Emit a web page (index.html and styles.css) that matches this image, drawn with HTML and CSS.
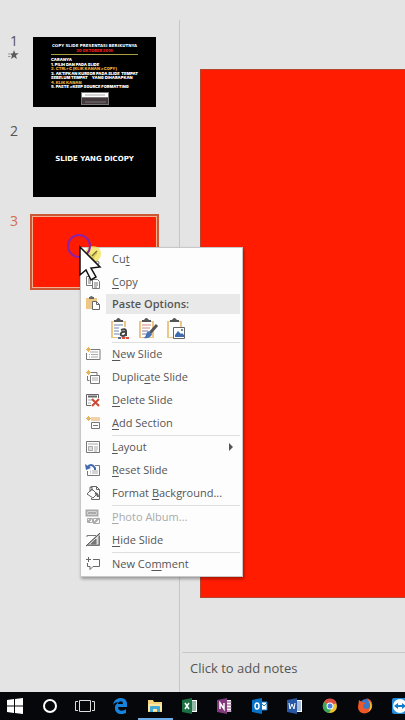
FILE: index.html
```
<!DOCTYPE html>
<html lang="en">
<head>
<meta charset="utf-8">
<meta name="viewport" content="width=device-width, initial-scale=1">
<title>Presentation editor</title>
<link rel="stylesheet" href="styles.css">
</head>
<body>
<div class="workspace">
  <nav class="slides" aria-label="Slides">
    <div class="slide-row">
      <div class="slide-label"><span>1</span>
        <svg class="star" width="11" height="10" viewBox="0 0 11 10"><path d="M6 0l1.200 3.200 3.500.1-2.800 2.100 1 3.600L6 7 3 9l1-3.600-2-1.700 2.900-.5z" fill="#5c5c5c"/><path d="M0 4h2M0 6.500h2.500" stroke="#999"/></svg>
      </div>
      <button class="thumb cover" type="button">
        <span class="cover-title">COPY SLIDE PRESENTASI BERIKUTNYA</span>
        <span class="cover-date">20 OKTOBER 2016</span>
        <span class="cover-list">
          <span>CARANYA</span>
          <span>1. PILIH DAN PADA SLIDE</span>
          <span class="gold">2. CTRL+C (KLIK KANAN &gt;COPY)</span>
          <span>3. AKTIFKAN KURSOR PADA SLIDE &nbsp;TEMPAT</span>
          <span>SEBELUM TEMPAT &nbsp; &nbsp; YANG DIHARAPKAN</span>
          <span class="gold">4. KLIK KANAN</span>
          <span>5. PASTE &gt;KEEP SOURCE FORMATTING</span>
        </span>
        <svg class="cover-badge" width="28" height="13" viewBox="0 0 28 13"><path fill="#777" d="M0 0h28v13H0z"/><path fill="#fff" d="M1 1h26v4H1z"/><path fill="#43383b" d="M1 6h26v6H1z"/><path d="M4 3h20" stroke="#aaa"/><path d="M4 10h21" stroke="#777"/></svg>
      </button>
    </div>
    <div class="slide-row">
      <div class="slide-label"><span>2</span></div>
      <button class="thumb plain" type="button">SLIDE YANG DICOPY</button>
    </div>
    <div class="slide-row current">
      <div class="slide-label"><span>3</span></div>
      <button class="thumb red" type="button" aria-label="Slide 3"></button>
    </div>
  </nav>
  <main class="editor">
    <div class="stage"><div class="canvas"></div></div>
    <div class="notes"><button type="button">Click to add notes</button></div>
  </main>
</div>

<div class="menu" role="menu">
  <button class="item" role="menuitem"><svg width="16" height="16" viewBox="0 0 16 16" fill="none" stroke="#666"><path d="M4 2l7 9M12 2L6 10"/><circle cx="5" cy="12" r="2"/><circle cx="12" cy="12" r="2"/></svg><span>Cu<u>t</u></span></button>
  <button class="item" role="menuitem"><svg width="16" height="16" viewBox="0 0 16 16" fill="#fff" stroke="#777"><path d="M1.500 2.500h6l1 1v8h-7z"/><path d="M3 5h3M3 7h3M3 9h3"/><path d="M7.500 5.500h5l2 2v7h-7z"/><path d="M9 9h4M9 11h4M9 13h3"/></svg><span><u>C</u>opy</span></button>
  <div class="heading"><svg width="16" height="16" viewBox="0 0 16 16"><path d="M1 3h11v11H1z" fill="#edc785"/><path d="M4 4V2h1q1-2 3 0h1v2z" fill="#666"/><path d="M7.500 6.500h4l3 3v5h-7z" fill="#fff" stroke="#666"/><path d="M11.500 6.500v3h3" fill="none" stroke="#666"/></svg><span>Paste Options:</span></div>
  <div class="paste">
    <button type="button" aria-label="Use destination theme"><svg width="22" height="24" viewBox="0 0 22 24"><path d="M2 4h15v17H2z" fill="#edc785"/><path d="M4 5h11v15H4z" fill="#fff"/><path d="M5 5V3h2q2-4 5 0h2v2z" fill="#555"/><path d="M5 8h9M5 11h6M5 14h6M5 17h6" stroke="#6685af"/><path d="M10 10h9v10h-9z" fill="#fff"/><path d="M12 13q5-2 5 1v5M17 15c-6-1-7 4-3 4q2 0 3-2" fill="none" stroke="#444" stroke-width="2"/><path d="M9 20h3v2H9z" fill="#668"/><path d="M13 20h3v2h-3zM17 20h3v2h-3z" fill="#d8503f"/></svg></button>
    <button type="button" aria-label="Keep source formatting"><svg width="22" height="24" viewBox="0 0 22 24"><path d="M2 4h15v17H2z" fill="#edc785"/><path d="M4 5h11v15H4z" fill="#fff"/><path d="M5 5V3h2q2-4 5 0h2v2z" fill="#555"/><path d="M5 8h9M5 11h8" stroke="#d4897c"/><path d="M5 14h6M5 17h4" stroke="#8a7bab"/><path d="M20 8l-7 8" stroke="#555" stroke-width="3"/><path d="M11 14l4 3q-1 5-9 4 3-1 3-4z" fill="#4773b5"/></svg></button>
    <button type="button" aria-label="Picture"><svg width="22" height="24" viewBox="0 0 22 24"><path d="M2 4h15v17H2z" fill="#edc785"/><path d="M4 5h11v15H4z" fill="#fff"/><path d="M5 5V3h2q2-4 5 0h2v2z" fill="#555"/><path d="M8.500 10.500h11v11h-11z" fill="#fff" stroke="#666"/><path d="M10 20v-2l3-4 3 3 1-1 2 2v2z" fill="#3c6cae"/><path d="M16 12h2v2h-2z" fill="#6c87aa"/></svg></button>
  </div>
  <hr>
  <button class="item" role="menuitem"><svg width="16" height="16" viewBox="0 0 16 16" fill="none" stroke="#777"><path d="M6 3.500h9v10H1.500V7"/><path d="M5 6h8M6 8.500h7M4 8.500h1M6 11h7M4 11h1" stroke="#aaa"/><path d="M3.500 1v5M1 3.500h5M2 2l3 3M5 2L2 5" stroke="#e2b45e"/></svg><span><u>N</u>ew Slide</span></button>
  <button class="item" role="menuitem"><svg width="16" height="16" viewBox="0 0 16 16" fill="none" stroke="#777"><path d="M6 3.500h6v3M2.500 7v4.500h2"/><path d="M5.500 6.500h9v8h-9z"/><path d="M7 9h6M7 11h6" stroke="#aaa"/><path d="M3.500 1v5M1 3.500h5M2 2l3 3M5 2L2 5" stroke="#e2b45e"/></svg><span>Duplic<u>a</u>te Slide</span></button>
  <button class="item" role="menuitem"><svg width="16" height="16" viewBox="0 0 16 16" fill="none" stroke="#666"><path d="M6 13.500H1.500v-11h12V6"/><path d="M3 4.500h9" stroke-width="2"/><path d="M3 8h4M3 11h3" stroke="#aaa"/><path d="M7 7l7 7M14 7l-7 7" stroke="#cc4936" stroke-width="2"/></svg><span><u>D</u>elete Slide</span></button>
  <button class="item" role="menuitem"><svg width="16" height="16" viewBox="0 0 16 16" fill="none" stroke="#777"><path d="M6 3h9M6 5h9" stroke="#e3a65a"/><path d="M6.500 7.500h8v6h-8z"/><path d="M8 10.500h5"/><path d="M3.500 1v5M1 3.500h5M2 2l3 3M5 2L2 5" stroke="#e2b45e"/></svg><span><u>A</u>dd Section</span></button>
  <hr>
  <button class="item" role="menuitem"><svg width="16" height="16" viewBox="0 0 16 16" fill="none" stroke="#777"><path d="M1.500 2.500h13v11h-13z"/><path d="M3 5h10" stroke="#aaa"/><path d="M3.500 7.500h4v4h-4z" fill="#ddd" stroke="#aaa"/><path d="M9 8h4M9 10h4M9 12h3" stroke="#aaa"/></svg><span><u>L</u>ayout</span><svg class="arrow" width="4" height="8" viewBox="0 0 4 8"><path d="M0 0l4 4-4 4z" fill="#555"/></svg></button>
  <button class="item" role="menuitem"><svg width="16" height="16" viewBox="0 0 16 16" fill="none" stroke="#777"><path d="M10 3.500h4.500v10h-12V9"/><path d="M5 9h1M7 9h6M5 11h1M7 11h6" stroke="#aaa"/><path d="M2 6q4-6 8 0v2" stroke="#4468ad" stroke-width="2"/><path d="M0 2l1 6 5-2z" fill="#4468ad" stroke="none"/></svg><span><u>R</u>eset Slide</span></button>
  <button class="item" role="menuitem"><svg width="16" height="16" viewBox="0 0 16 16" fill="none" stroke="#666"><path d="M6.500 3V1.500h5l3 3v10h-8V13"/><path d="M11.500 1.500v3h3"/><path d="M2 9l5-5 5 5-4 4z" fill="#fff"/><path d="M5 7V2h2v4"/><path d="M10 8q3 1 3 4" stroke-width="2"/></svg><span>Format <u>B</u>ackground...</span></button>
  <hr>
  <button class="item" role="menuitem" disabled><svg width="16" height="16" viewBox="0 0 16 16" fill="none" stroke="#aaa"><path d="M1.500 1.500h11v5h-11zM3 4h8" stroke-width="2"/><path d="M2.500 9.500h5v4h-5zM8.500 9.500h6v5h-6z"/><path d="M3 13l3-3M9 14l5-5" stroke-width="2"/></svg><span><u>P</u>hoto Album...</span></button>
  <button class="item" role="menuitem"><svg width="16" height="16" viewBox="0 0 16 16" fill="none" stroke="#777"><path d="M2 5V3.500h9M14.500 4v9.500H3"/><path d="M1 14L14 2v11H3z" fill="#ddd"/><path d="M6 12l5-5v5z" fill="#777"/><path d="M1 14L15 1" stroke="#555"/></svg><span><u>H</u>ide Slide</span></button>
  <hr>
  <button class="item" role="menuitem"><svg width="16" height="16" viewBox="0 0 16 16" fill="none" stroke="#666"><path d="M8 3.500h6.500v7H8l-3 3v-3H2.500V7"/><path d="M3.500 1v5M1 3.500h5"/></svg><span>New Co<u>m</u>ment</span></button>
</div>

<svg class="pointer" width="40" height="50" viewBox="0 0 40 50"><circle cx="26" cy="20" r="8" fill="#f2df4b" opacity=".75"/><circle cx="12" cy="12" r="11" fill="none" stroke="#8b22a8" stroke-width="2"/><path d="M13 13v28l6-5 5 10 5-3-5-9 9-1z" fill="#fff" stroke="#111" stroke-width="1.500"/><path d="M25 22l5-5" stroke="#776c35" stroke-width="1.500"/></svg>

<footer class="taskbar">
  <button type="button" aria-label="Start"><svg width="16" height="16" viewBox="0 0 16 16" fill="#fff"><path d="M0 2l7-1v6.500H0zM8 1l8-1v7.500H8zM0 8.500h7V15l-7-1zM8 8.500h8V16l-8-1z"/></svg></button>
  <button type="button" aria-label="Search"><svg width="16" height="16" viewBox="0 0 16 16"><circle cx="8" cy="8" r="6" fill="none" stroke="#fff" stroke-width="2"/></svg></button>
  <button type="button" aria-label="Task view"><svg width="20" height="16" viewBox="0 0 20 16" fill="none" stroke="#ddd"><path d="M4.500 2.500h11v11h-11zM3 3.500H.500v9H3M17 3.500h2.500v9H17"/></svg></button>
  <button type="button" aria-label="Edge"><svg width="16" height="16" viewBox="0 0 16 16"><path d="M1 7C2 2 5 0 9 0c4 0 6 3 6 6v3H6c0 5 6 4 8 2v4C8 18 2 15 3 9c0-2 2-4 4-5-3 0-5 1-6 3zm5-1h5c0-4-5-3-5 0z" fill="#1683dc"/></svg></button>
  <button type="button" class="open" aria-label="File Explorer"><svg width="16" height="16" viewBox="0 0 16 16"><path d="M1 2h5l1 2h8v10H1z" fill="#f6d477"/><path d="M1 6h14v7H1z" fill="#fbe7a2"/><path d="M3 14V9q0-1 1-1h8q1 0 1 1v5h-3v-3H6v3z" fill="#43a9d5"/></svg></button>
  <button type="button" aria-label="Excel"><svg width="16" height="16" viewBox="0 0 16 16"><path d="M8 2h7v12H8z" fill="#fff"/><path d="M10 4h4M10 6h4M10 8h4M10 10h4M10 12h4" stroke="#21744a"/><path d="M0 2l10-2v16L0 14z" fill="#1d7044"/><path d="M3 5l4 6M7 5l-4 6" stroke="#fff" stroke-width="1.500"/></svg></button>
  <button type="button" aria-label="OneNote"><svg width="16" height="16" viewBox="0 0 16 16"><path d="M8 2h6v12H8z" fill="#fff"/><path d="M10 4h5M10 7h5M10 10h5M10 13h5" stroke="#8b4380"/><path d="M0 2l10-2v16L0 14z" fill="#80397b"/><path d="M3 11V5l4 6V5" fill="none" stroke="#fff" stroke-width="1.500"/></svg></button>
  <button type="button" aria-label="Outlook"><svg width="16" height="16" viewBox="0 0 16 16"><path d="M8 4h7v8H8z" fill="#fff" stroke="#1679c7"/><path d="M9 5l3 3 3-3" fill="none" stroke="#1679c7"/><path d="M0 2l10-2v16L0 14z" fill="#0872c6"/><ellipse cx="5" cy="8" rx="2" ry="3" fill="none" stroke="#fff" stroke-width="1.500"/></svg></button>
  <button type="button" aria-label="Word"><svg width="16" height="16" viewBox="0 0 16 16"><path d="M8 2h7v12H8z" fill="#fff"/><path d="M10 4h4M10 6h4M10 8h4M10 10h4M10 12h4" stroke="#5377b4"/><path d="M0 2l10-2v16L0 14z" fill="#2857a4"/><path d="M2 5l1 6 2-5 2 5 1-6" fill="none" stroke="#fff"/></svg></button>
  <button type="button" aria-label="Chrome"><svg width="16" height="16" viewBox="0 0 16 16"><circle cx="8" cy="8" r="7" fill="#f2c230"/><path d="M8 8L2 4a7 7 0 0 1 12.500 1z" fill="#dd5144"/><path d="M8 8L2 4a7 7 0 0 0 5 11l3-5z" fill="#3ba55b"/><circle cx="8" cy="8" r="3.500" fill="#fff"/><circle cx="8" cy="8" r="2.500" fill="#4b84d8"/></svg></button>
  <button type="button" aria-label="Firefox"><svg width="16" height="16" viewBox="0 0 16 16"><circle cx="9" cy="7" r="6" fill="#3977c8"/><path d="M2 2l3 2 4 1-3 2c0 5 6 5 7 1 1-3-1-5-4-8 5 1 7 5 6 9-2 9-14 8-14 0z" fill="#ee5727"/><path d="M11 2c5 4 5 9 0 12 3-4 3-8 0-12z" fill="#ffc52e"/></svg></button>
  <button type="button" aria-label="TeamViewer"><svg width="16" height="16" viewBox="0 0 16 16"><rect width="16" height="16" rx="2" fill="#238bdb"/><circle cx="8" cy="8" r="7" fill="#fff"/><path d="M2 8l4-3v2h4V5l4 3-4 3V9H6v2z" fill="#147bc9"/></svg></button>
</footer>
</body>
</html>
```

FILE: styles.css
```
* {
  box-sizing: border-box;
}

body {
  margin: 0;
  min-height: 100vh;
  display: flex;
  flex-direction: column;
  position: relative;
  overflow: hidden;
  background: #e4e4e4;
  color: #555;
  font-family: "Open Sans", "Noto Sans", sans-serif;
}

button {
  margin: 0;
  padding: 0;
  border: 0;
  background: none;
  color: inherit;
  font: inherit;
  text-align: left;
}

svg {
  display: block;
  flex: none;
}

.workspace {
  flex: 1;
  display: flex;
  padding-top: 20px;
}

.slides {
  flex: none;
  width: 180px;
  padding-top: 14px;
  display: flex;
  flex-direction: column;
  gap: 14px;
  border-right: 1px solid #c6c6c6;
}

.slide-row {
  display: flex;
}

.slide-label {
  width: 30px;
  padding-left: 10px;
  font-size: 14px;
  line-height: 13px;
}

.star {
  margin: 3px 0 0 -2px;
}

.thumb {
  width: 129px;
  height: 76px;
  border: 3px solid transparent;
  background: #000 padding-box;
  color: #fff;
  font-family: "DejaVu Sans", sans-serif;
  font-weight: 700;
  text-align: center;
}

.cover {
  display: flex;
  flex-direction: column;
  align-items: center;
  padding: 6px 18px 0;
  font-family: Inter, sans-serif;
  font-size: 4px;
  font-weight: 900;
  line-height: 4px;
  white-space: nowrap;
}

.cover-title {
  font-family: "DejaVu Sans", sans-serif;
  line-height: 5px;
}

.cover-date {
  align-self: stretch;
  padding-bottom: 1px;
  border-bottom: 1px solid #a7a044;
  color: #e11f1c;
  line-height: 5px;
}

.cover-list {
  align-self: stretch;
  height: 31px;
  margin-top: 3px;
  display: flex;
  flex-direction: column;
  justify-content: space-between;
  text-align: left;
}

.gold {
  color: #e4a63a;
}

.cover-badge {
  margin-top: 3px;
}

.plain {
  padding-bottom: 6px;
  font-size: 7px;
}

.red {
  border: 2px solid #ca5735;
  outline: 1px solid #efb08d;
  outline-offset: -3px;
  background: #ff1c00;
}

.current .slide-label {
  color: #d36c50;
}

.editor {
  flex: 1;
  min-width: 0;
  padding-left: 2px;
  display: flex;
  flex-direction: column;
}

.stage {
  flex: 1;
  display: flex;
  padding: 49px 0 54px 18px;
  border-bottom: 1px solid #c8c8c8;
}

.canvas {
  flex: 1;
  border: solid #b4452f;
  border-width: 1px 0 1px 1px;
  background: #ff1c00;
}

.notes {
  height: 39px;
  padding: 6px 8px;
  font-size: 13px;
  line-height: 18px;
}

.menu {
  position: absolute;
  top: 247px;
  left: 80px;
  width: 163px;
  border: 1px solid #c8c8c8;
  background: #fdfdfd;
  box-shadow: 1px 2px 3px #0005;
  font-size: 11px;
}

.item,
.heading {
  width: 100%;
  height: 23px;
  display: flex;
  align-items: center;
  gap: 11px;
  padding: 0 9px 2px 4px;
  white-space: nowrap;
}

.item u {
  text-underline-offset: 2px;
}

.item:disabled {
  color: #aaa;
}

.heading {
  width: auto;
  height: 20px;
  margin-right: 2px;
  background: linear-gradient(#e9e9e9, #e9e9e9) 25px 0 no-repeat;
  font-weight: 600;
}

.arrow {
  margin-left: auto;
}

.paste {
  height: 28px;
  display: flex;
  align-items: center;
  gap: 6px;
  padding: 2px 0 0 28px;
}

.menu hr {
  height: 1px;
  margin: 0 2px 0 31px;
  border: 0;
  background: #dedede;
}

.pointer {
  position: absolute;
  top: 234px;
  left: 67px;
}

.taskbar {
  flex: none;
  height: 28px;
  display: flex;
  margin: 0 -12px 0 -2px;
  background: #05070b;
}

.taskbar button {
  flex: 1;
  display: flex;
  align-items: center;
  justify-content: center;
}

.taskbar .open {
  border: solid #6eaee8;
  border-width: 0 0 2px;
  padding-top: 2px;
}
```
